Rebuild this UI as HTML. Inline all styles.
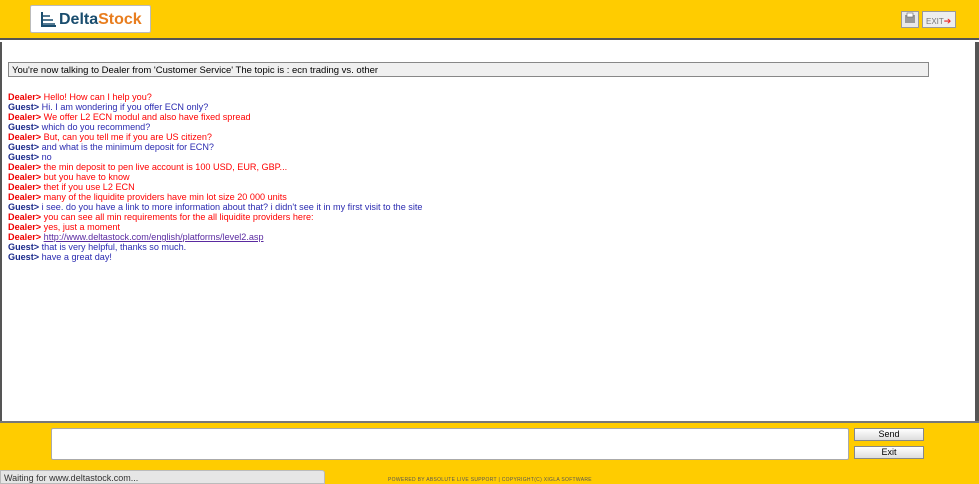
<!DOCTYPE html>
<html><head><meta charset="utf-8"><style>
*{margin:0;padding:0;box-sizing:border-box}
body{width:979px;height:484px;position:relative;overflow:hidden;background:#fff;font-family:"Liberation Sans","DejaVu Sans",sans-serif}
.top{position:absolute;left:0;top:0;width:979px;height:40px;background:#ffcc00;border-bottom:2px solid #555}
.logo{position:absolute;left:30px;top:5px;width:121px;height:28px;background:#fff;border:1px solid #bbb;border-radius:2px}
.logo span{position:absolute;left:28px;top:5px;font-size:16px;font-weight:bold;color:#1a4d6e}
.logo span b{color:#e87d1e;font-weight:bold}
.btn1{position:absolute;left:901px;top:11px;width:18px;height:17px;background:#e8e8e8;border:1px solid #999}
.btn2{position:absolute;left:922px;top:11px;width:34px;height:17px;background:#eee;border:1px solid #999;font-size:8px;color:#777;padding:4px 0 0 3px}
.main{position:absolute;left:0;top:42px;width:979px;height:379px;border-left:2px solid #555;border-right:4px solid #555}
.topic{position:absolute;left:8px;top:62px;width:921px;height:15px;border:1px solid #888;background:#f0f0f0;font-size:9.5px;padding:2px 0 0 3px;color:#000}
.chat{position:absolute;left:8px;top:92px;font-size:9.1px;line-height:10px}
.d{color:#f00}.g{color:#2a2ab0}
.d b{color:#e00}.g b{color:#1a2a8a}
a{color:#5a2aa0;text-decoration:underline}
.bot{position:absolute;left:0;top:421px;width:979px;height:63px;background:#ffcc00;border-top:2px solid #777}
.ta{position:absolute;left:51px;top:428px;width:798px;height:32px;background:#fff;border:1px solid #aaa;border-radius:2px}
.b{position:absolute;left:854px;width:70px;height:13px;background:linear-gradient(#fff,#ddd);border:1px solid #888;font-size:9px;text-align:center;line-height:11px}
.status{position:absolute;left:0;top:470px;width:325px;height:14px;background:#e6e6e6;border:1px solid #bbb;border-radius:0 3px 0 0;font-size:9px;color:#333;padding:2px 0 0 3px}
.pw{position:absolute;left:388px;top:477px;font-size:5px;color:#555;letter-spacing:.3px}
</style></head><body>
<div class="top">
 <div class="logo"><svg style="position:absolute;left:8px;top:5px" width="18" height="18" viewBox="0 0 18 18"><path d="M3 1v14h14" stroke="#1a4d6e" stroke-width="2" fill="none"/><path d="M3 5h8M3 9h11M3 13h13" stroke="#1a4d6e" stroke-width="1.5"/></svg><span>Delta<b>Stock</b></span></div>
 <div class="btn1"><svg width="16" height="15" viewBox="0 0 16 15"><rect x="3" y="3" width="10" height="8" fill="#999"/><rect x="5" y="1" width="6" height="4" fill="#fff" stroke="#666" stroke-width=".6"/></svg></div>
 <div class="btn2">EXIT<span style="color:#e22;font-size:9px">➔</span></div>
</div>
<div class="main"></div>
<div class="topic">You're now talking to Dealer from 'Customer Service' The topic is : ecn trading vs. other</div>
<div class="chat">
<div class="d"><b>Dealer&gt;</b> Hello! How can I help you?</div>
<div class="g"><b>Guest&gt;</b> Hi. I am wondering if you offer ECN only?</div>
<div class="d"><b>Dealer&gt;</b> We offer L2 ECN modul and also have fixed spread</div>
<div class="g"><b>Guest&gt;</b> which do you recommend?</div>
<div class="d"><b>Dealer&gt;</b> But, can you tell me if you are US citizen?</div>
<div class="g"><b>Guest&gt;</b> and what is the minimum deposit for ECN?</div>
<div class="g"><b>Guest&gt;</b> no</div>
<div class="d"><b>Dealer&gt;</b> the min deposit to pen live account is 100 USD, EUR, GBP...</div>
<div class="d"><b>Dealer&gt;</b> but you have to know</div>
<div class="d"><b>Dealer&gt;</b> thet if you use L2 ECN</div>
<div class="d"><b>Dealer&gt;</b> many of the liquidite providers have min lot size 20 000 units</div>
<div class="g"><b>Guest&gt;</b> i see. do you have a link to more information about that? i didn't see it in my first visit to the site</div>
<div class="d"><b>Dealer&gt;</b> you can see all min requirements for the all liquidite providers here:</div>
<div class="d"><b>Dealer&gt;</b> yes, just a moment</div>
<div class="d"><b>Dealer&gt;</b> <a>http://www.deltastock.com/english/platforms/level2.asp</a></div>
<div class="g"><b>Guest&gt;</b> that is very helpful, thanks so much.</div>
<div class="g"><b>Guest&gt;</b> have a great day!</div>
</div>
<div class="bot"></div>
<div class="ta"></div>
<div class="b" style="top:428px">Send</div>
<div class="b" style="top:446px">Exit</div>
<div class="status">Waiting for www.deltastock.com...</div>
<div class="pw">POWERED BY ABSOLUTE LIVE SUPPORT | COPYRIGHT(C) XIGLA SOFTWARE</div>
</body></html>
